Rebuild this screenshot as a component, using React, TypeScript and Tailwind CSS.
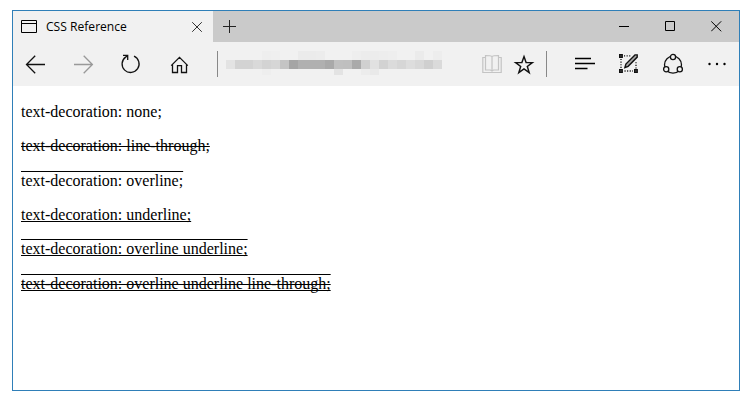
import React from "react";

const upper: Record<number, string> = { 4: "#eeeeee", 5: "#efefef", 8: "#ebebeb", 9: "#ebebeb", 10: "#ececec", 14: "#eeeeee", 15: "#ececec", 16: "#ececec", 17: "#ededed", 18: "#eeeeee", 21: "#ebebeb", 23: "#ededed" };
const middle = ["#e3e3e3", "#d3d3d3", "#d3d3d3", "#d9d9d9", "#d3d3d3", "#d6d6d6", "#c4c4c4", "#a5a5a5", "#b0b0b0", "#b0b0b0", "#b0b0b0", "#a9a9a9", "#c0c0c0", "#bfbfbf", "#aaaaaa", "#d0d0d0", "#e1e1e1", "#d2d2d2", "#dbdbdb", "#d6d6d6", "#dddddd", "#d8d8d8", "#cfcfcf", "#dadada"];
const lower: Record<number, string> = { 4: "#eeeeee", 12: "#e3e3e3", 15: "#ececec", 16: "#e9e9e9" };

function Address() {
  return (
    <div className="ml-2 mt-[9px] flex w-[216px] flex-col">
      <div className="flex h-[9px]">
        {middle.map((_, i) => <div key={i} className="w-[9px]" style={{ backgroundColor: upper[i] }} />)}
      </div>
      <div className="flex h-[9px]">
        {middle.map((c, i) => <div key={i} className="w-[9px]" style={{ backgroundColor: c }} />)}
      </div>
      <div className="flex h-[6px]">
        {middle.map((_, i) => <div key={i} className="w-[9px]" style={{ backgroundColor: lower[i] }} />)}
      </div>
    </div>
  );
}

function Icon({ className, children }: { className: string; children: React.ReactNode }) {
  return (
    <svg className={"block h-6 w-6 shrink-0 " + className} viewBox="0 0 24 24" fill="none" stroke="#111" strokeWidth="1.3">
      {children}
    </svg>
  );
}

function TabBar() {
  return (
    <div className="flex h-[31px] bg-[#cacaca]">
      <div className="flex w-[200px] items-center bg-[#f1f1f1] pl-2">
        <svg className="block shrink-0" width="16" height="13" viewBox="0 0 16 13" fill="none" stroke="#000">
          <path d="M.5.5h15v12H.5zM.5 3.5h15" />
        </svg>
        <span className="ml-[9px] w-[146px] whitespace-nowrap font-['Open_Sans',sans-serif] text-[12.1px] leading-[31px] text-black">CSS Reference</span>
        <svg className="block shrink-0" width="10" height="10" viewBox="0 0 10 10" fill="none" stroke="#333">
          <path d="m.2.2 9.6 9.6m0-9.6L.2 9.8" />
        </svg>
      </div>
      <svg className="ml-[10px] mt-[9px] block" width="13" height="13" viewBox="0 0 13 13" stroke="#222">
        <path d="M0 6.5h13M6.5 0v13" />
      </svg>
      <div className="ml-auto mt-[10px] flex h-[11px] pr-[17px]">
        <svg className="block" width="10" height="11" stroke="#000"><path d="M0 5.5h10" /></svg>
        <svg className="ml-9 block" width="10" height="11" fill="none" stroke="#000"><path d="M.5.5h9v9h-9z" /></svg>
        <svg className="ml-9 block" width="11" height="11" stroke="#000"><path d="m.2.3 10 10m0-10-10 10" /></svg>
      </div>
    </div>
  );
}

function Toolbar() {
  return (
    <div className="flex h-11 bg-[#f1f1f1]">
      <Icon className="ml-[11px] mt-[10px]">
        <path d="M2.5 12.5H21M11.2 3.8 2.5 12.5l8.7 8.7" />
      </Icon>
      <Icon className="ml-6 mt-[10px]">
        <path stroke="#999" d="M2 12.5h18.3M11.7 3.8l8.7 8.7-8.7 8.7" />
      </Icon>
      <Icon className="ml-6 mt-[10px]">
        <path d="M14 4.2A8.5 8.5 0 1 1 5.6 5.1L7.6 3.8M3 3.4h4.7v4.7" />
      </Icon>
      <Icon className="ml-6 mt-[10px]">
        <path d="m3.2 13.6 8.3-8.3 8.3 8.3M4.5 12.5v8h5v-6.8h4v6.8h5v-8" />
      </Icon>
      <div className="ml-[25px] mt-[9px] h-[26px] w-px bg-[#888]" />
      <Address />
      <Icon className="ml-[38px] mt-[10px]">
        <g stroke="#c4c4c4" strokeWidth="1.2">
          <path d="M12 4.5C11 3.500 7 3.500 5.500 3.500v14.500h5l1.500 1 1.500-1h5V3.500c-1.500 0-5.500 0-6.500 1V19" />
          <path d="M5.500 5.500h-2.700v15h18.400v-15h-2.700" />
        </g>
      </Icon>
      <Icon className="ml-2 mt-[10px]">
        <path strokeWidth="1.45" d="m12 4.600 2.100 6h6.200l-5 3.800 1.900 6.200-5.200-3.700-5.200 3.700 1.900-6.200-5-3.800h6.200z" />
      </Icon>
      <div className="ml-[10px] mt-[9px] h-[26px] w-px bg-[#888]" />
      <Icon className="ml-[26px] mt-[10px]">
        <path d="M2 6.5h16M2 11.5h20M2 16.5h12.5" stroke="#000" />
      </Icon>
      <Icon className="ml-5 mt-[10px]">
        <path strokeDasharray="1.1 1.5" d="M7 3.8h7M4 7v9.5M7.5 19H16M19 16.5V10" />
        <path d="M2.7 2.7h2.5v2.5H2.7zM2.700 17.700h2.500v2.500H2.700zM17.700 17.700h2.500v2.500h-2.500z" fill="#777" strokeWidth="1.400" />
        <path fill="#aaa" strokeWidth="1.400" d="m7.900 15.500 1-3.500L18 2.900h2.200v2.200l-9.100 9.200z" />
      </Icon>
      <Icon className="ml-5 mt-[10px]">
        <circle cx="12" cy="12.7" r="8.5" />
        <g fill="#f1f1f1">
          <circle cx="12" cy="5" r="2.6" />
          <circle cx="5.2" cy="17.3" r="2.6" />
          <circle cx="18.8" cy="17.3" r="2.6" />
        </g>
      </Icon>
      <Icon className="ml-5 mt-[10px]">
        <g fill="#000" stroke="none">
          <circle cx="4.5" cy="12" r="1.2" /><circle cx="12" cy="12" r="1.2" /><circle cx="19.500" cy="12" r="1.2" />
        </g>
      </Icon>
    </div>
  );
}

export default function App() {
  return (
    <div className="h-[400px] w-[750px] bg-white pl-3 pt-[10px]">
      <div className="flex h-[381px] w-[728px] flex-col border border-[#2f7fb8] bg-white">
        <TabBar />
        <Toolbar />
        <div className="flex flex-col items-start gap-[14.4px] whitespace-nowrap pl-2 pt-[15.8px] font-['Liberation_Serif',serif] text-[16px] leading-5 text-black [text-decoration-skip-ink:none]">
          <p>text-decoration: none;</p>
          <p className="line-through">text-decoration: line-through;</p>
          <p className="overline">text-decoration: overline;</p>
          <p className="underline">text-decoration: underline;</p>
          <p className="[text-decoration-line:overline_underline]">text-decoration: overline underline;</p>
          <p className="[text-decoration-line:overline_underline_line-through]">text-decoration: overline underline line-through;</p>
        </div>
      </div>
    </div>
  );
}
